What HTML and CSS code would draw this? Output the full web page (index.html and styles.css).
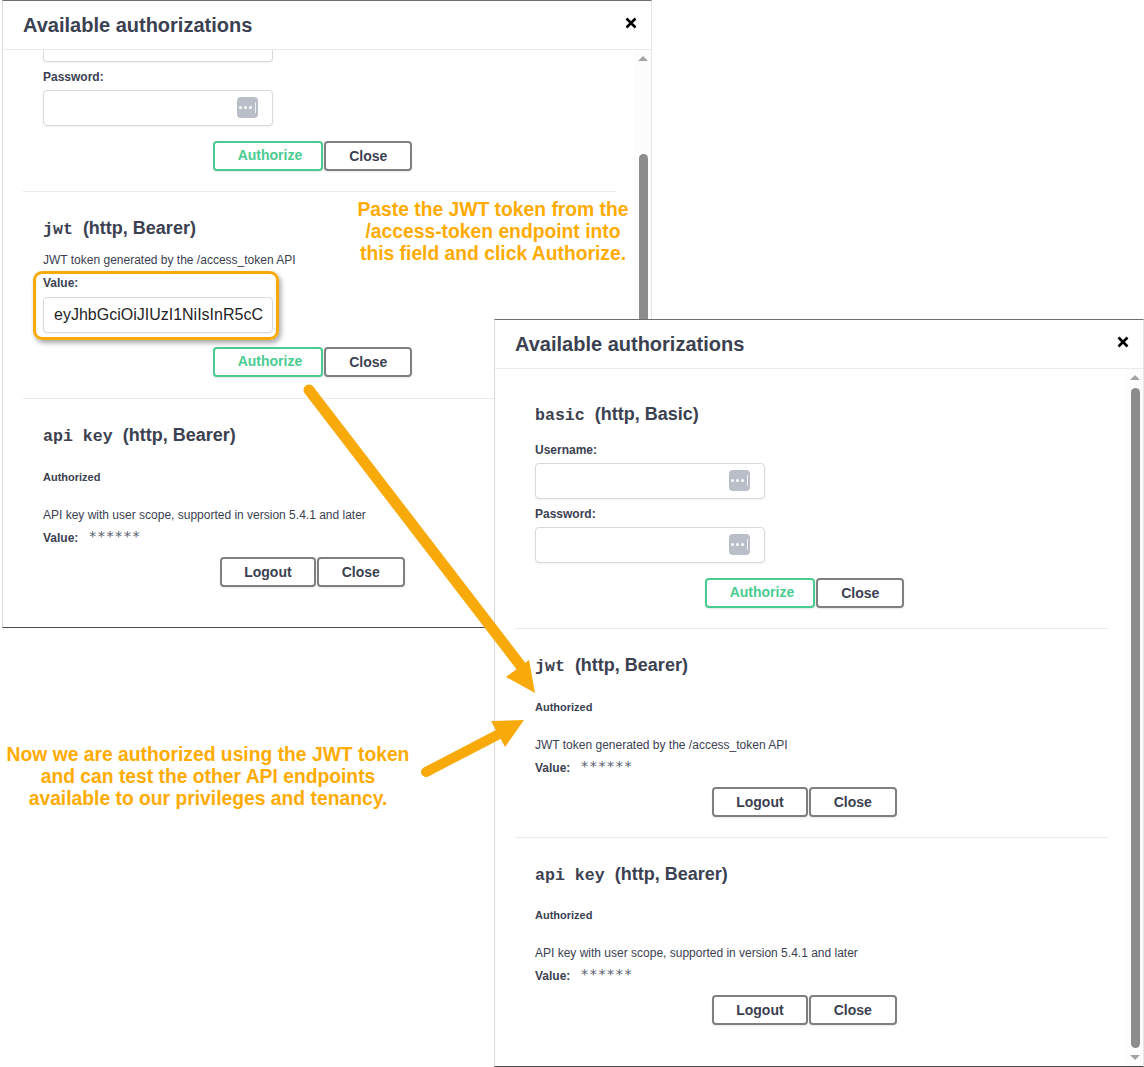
FILE: index.html
```html
<!DOCTYPE html>
<html lang="en">
<head>
<meta charset="utf-8">
<title>Available authorizations</title>
<link rel="stylesheet" href="styles.css">
</head>
<body>
<main class="canvas">
  <section class="window window-back">
    <header class="win-head">
      <h2 class="win-title">Available authorizations</h2>
      <svg class="win-close" viewBox="0 0 12 12"><path d="M1.5 1.5l9 9M10.5 1.5l-9 9"/></svg>
    </header>
    <div class="win-body">
      <div class="scroll-area scrolled">
        <div class="auth">
          <div class="field-input field-clipped"><span class="key"><i></i><i></i><i></i><b></b></span></div>
          <div class="label label-first">Password:</div>
          <div class="field-input"><span class="key"><i></i><i></i><i></i><b></b></span></div>
          <div class="actions"><button class="btn btn-go">Authorize</button><button class="btn">Close</button></div>
        </div>
        <div class="auth">
          <h4 class="auth-title"><code>jwt</code>&nbsp; (http, Bearer)</h4>
          <p class="desc desc-tight">JWT token generated by the /access_token API</p>
          <div class="label label-value">Value:</div>
          <div class="field-input field-value">eyJhbGciOiJIUzI1NiIsInR5cC</div>
          <div class="actions"><button class="btn btn-go">Authorize</button><button class="btn">Close</button></div>
        </div>
        <div class="auth auth-last">
          <h4 class="auth-title"><code>api key</code>&nbsp; (http, Bearer)</h4>
          <div class="status">Authorized</div>
          <p class="desc">API key with user scope, supported in version 5.4.1 and later</p>
          <div class="value-row"><span class="value-label">Value:</span><code class="stars">******</code></div>
          <div class="actions actions-logout"><button class="btn btn-logout">Logout</button><button class="btn">Close</button></div>
        </div>
      </div>
      <div class="scrollbar">
        <span class="arrow-up"></span>
        <span class="thumb thumb-back"></span>
      </div>
    </div>
  </section>

  <section class="window window-front">
    <header class="win-head">
      <h2 class="win-title">Available authorizations</h2>
      <svg class="win-close" viewBox="0 0 12 12"><path d="M1.5 1.5l9 9M10.5 1.5l-9 9"/></svg>
    </header>
    <div class="win-body">
      <div class="scroll-area">
        <div class="auth">
          <h4 class="auth-title"><code>basic</code>&nbsp; (http, Basic)</h4>
          <div class="label label-first-field">Username:</div>
          <div class="field-input"><span class="key"><i></i><i></i><i></i><b></b></span></div>
          <div class="label">Password:</div>
          <div class="field-input"><span class="key"><i></i><i></i><i></i><b></b></span></div>
          <div class="actions"><button class="btn btn-go">Authorize</button><button class="btn">Close</button></div>
        </div>
        <div class="auth">
          <h4 class="auth-title"><code>jwt</code>&nbsp; (http, Bearer)</h4>
          <div class="status">Authorized</div>
          <p class="desc">JWT token generated by the /access_token API</p>
          <div class="value-row"><span class="value-label">Value:</span><code class="stars">******</code></div>
          <div class="actions actions-logout"><button class="btn btn-logout">Logout</button><button class="btn">Close</button></div>
        </div>
        <div class="auth auth-last">
          <h4 class="auth-title"><code>api key</code>&nbsp; (http, Bearer)</h4>
          <div class="status">Authorized</div>
          <p class="desc">API key with user scope, supported in version 5.4.1 and later</p>
          <div class="value-row"><span class="value-label">Value:</span><code class="stars">******</code></div>
          <div class="actions actions-logout"><button class="btn btn-logout">Logout</button><button class="btn">Close</button></div>
        </div>
      </div>
      <div class="scrollbar">
        <span class="arrow-up"></span>
        <span class="thumb"></span>
        <span class="arrow-down"></span>
      </div>
    </div>
  </section>

  <div class="highlight"></div>
  <p class="note note-paste">Paste the JWT token from the<br>/access-token endpoint into<br>this field and click Authorize.</p>
  <p class="note note-done">Now we are authorized using the JWT token<br>and can test the other API endpoints<br>available to our privileges and tenancy.</p>

  <svg class="arrows" viewBox="0 0 1144 1067">
    <path class="arrow-line" d="M309 390L524 670"/>
    <polygon class="arrow-head" points="535,693 506,677 529,660"/>
    <path class="arrow-line arrow-line-thin" d="M426 772L505 731"/>
    <polygon class="arrow-head" points="524,720 491,721 505,747"/>
  </svg>
</main>
</body>
</html>
```
FILE: styles.css
```css
* { box-sizing: border-box; }
html, body { margin: 0; padding: 0; background: #fff; }
.canvas {
  position: relative;
  width: 1144px;
  height: 1067px;
  overflow: hidden;
  font-family: "Liberation Sans", Arial, sans-serif;
  color: #3b4151;
}
.window {
  position: absolute;
  width: 650px;
  display: flex;
  flex-direction: column;
  background: #fff;
  border-top: 1px solid #6e6e6e;
  border-bottom: 1px solid #4a4a4a;
  border-left: 1px solid #d8d8d8;
  border-right: 1px solid #e6e6e6;
}
.window-back { left: 2px; top: 0; height: 628px; }
.window-front { left: 494px; top: 319px; height: 748px; }
.win-head {
  flex: none;
  height: 49px;
  padding: 0 14px 0 20px;
  display: flex;
  align-items: center;
  justify-content: space-between;
  border-bottom: 1px solid #ebebeb;
}
.win-title { margin: 0; font-size: 20px; font-weight: 700; line-height: 24px; }
.win-close { width: 12px; height: 12px; fill: none; stroke: #000; stroke-width: 2.6; margin-top: -4px; }
.win-body { flex: 1; min-height: 0; display: flex; }
.scroll-area { flex: 1; min-width: 0; overflow: hidden; }
.scrolled .auth:first-child { padding-top: 0; }
.auth { margin: 0 20px; padding: 34px 0 20px 20px; border-bottom: 1px solid #ebebeb; width: 593px; }
.auth + .auth { padding-top: 25px; }
.scrolled .auth:nth-child(2) { padding-bottom: 21px; }
.auth-last { border-bottom: 0; }
.auth-title { margin: 0; font-size: 18px; line-height: 22px; font-weight: 700; white-space: nowrap; }
.auth-title code { font-family: "Liberation Mono", monospace; font-size: 16.6px; font-weight: 700; }
.label { font-size: 12px; line-height: 14px; font-weight: 700; margin: 8px 0 6px; }
.label-first-field { margin-top: 16px; }
.label-value { margin: 9px 0 7px; }
.field-input {
  position: relative;
  width: 230px;
  height: 36px;
  background: #fff;
  border: 1px solid #d9d9d9;
  border-radius: 4px;
  box-shadow: 0 1px 2px rgba(0,0,0,.05);
}
.field-clipped { height: 12px; border-top: 0; border-radius: 0 0 4px 4px; overflow: hidden; }
.field-clipped .key { top: -24px; }
.field-value {
  padding: 0 10px;
  font-size: 16px;
  line-height: 33px;
  color: #1f1f1f;
  overflow: hidden;
  white-space: nowrap;
}
.field-value + .actions { margin-top: 14px; }
.key {
  position: absolute;
  right: 14px;
  top: 6px;
  width: 21px;
  height: 21px;
  border-radius: 4px;
  background: #b9bec9;
  display: flex;
  align-items: center;
  justify-content: center;
  gap: 2px;
}
.key i { width: 3px; height: 3px; border-radius: 50%; background: #fff; }
.key b { width: 1px; height: 11px; background: #f1f2f5; margin-left: 1px; }
.actions { display: flex; justify-content: center; padding-right: 34px; margin-top: 15px; gap: 1px; }
.actions-logout { margin-top: 12px; }
.btn {
  font-family: "Liberation Sans", Arial, sans-serif;
  font-size: 14px;
  line-height: 19px;
  font-weight: 700;
  color: #3b4151;
  background: #fff;
  height: 30px;
  padding: 4px 23px 6px;
  border: 2px solid #808080;
  border-radius: 4px;
  box-shadow: 0 1px 2px rgba(0,0,0,.1);
}
.btn-logout { padding-left: 22px; padding-right: 22px; }
.btn-go { color: #49cc90; border-color: #49cc90; padding: 3px 19px 7px 23px; }
.status { font-size: 11px; line-height: 14px; font-weight: 700; margin-top: 22px; }
.window-front .auth-last .status { margin-top: 21px; }
.desc { font-size: 12px; line-height: 14px; margin: 24px 0 0; }
.desc-tight { margin-top: 12px; }
.value-row { display: flex; align-items: baseline; margin-top: 8px; font-size: 12px; line-height: 14px; }
.value-label { font-weight: 700; }
.stars { font-family: "DejaVu Sans Mono", monospace; font-size: 14.4px; margin-left: 10px; position: relative; top: -1px; color: #5b6270; }
.scrollbar { flex: none; position: relative; width: 17px; background: #fcfcfc; }
.arrow-up, .arrow-down {
  position: absolute;
  left: 4px;
  width: 0;
  height: 0;
  border-left: 5px solid transparent;
  border-right: 5px solid transparent;
}
.arrow-up { top: 6px; border-bottom: 5px solid #a3a3a3; }
.arrow-down { bottom: 6px; border-top: 5px solid #a3a3a3; }
.thumb { position: absolute; left: 5px; top: 19px; width: 9px; height: 660px; border-radius: 5px; background: #8c8c8c; }
.thumb-back { top: 104px; height: 500px; }
.highlight {
  position: absolute;
  left: 33px;
  top: 271px;
  width: 246px;
  height: 69px;
  border: 3px solid #f9aa0b;
  border-radius: 9px;
  box-shadow: 2px 3px 5px rgba(0,0,0,.35);
}
.note {
  position: absolute;
  margin: 0;
  font-size: 19.3px;
  line-height: 22px;
  font-weight: 700;
  text-align: center;
  color: #ffab00;
  white-space: nowrap;
}
.note-paste { left: 343px; top: 199px; width: 300px; }
.note-done { left: 0; top: 744px; width: 416px; }
.arrows { position: absolute; left: 0; top: 0; width: 1144px; height: 1067px; pointer-events: none; }
.arrow-line { stroke: #f9aa0b; stroke-width: 11; stroke-linecap: round; fill: none; }
.arrow-line-thin { stroke-width: 10; }
.arrow-head { fill: #f9aa0b; }
```
